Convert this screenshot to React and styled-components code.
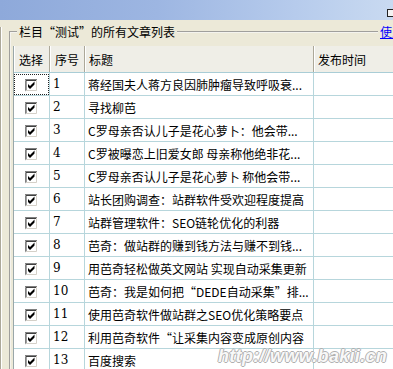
import React from "react";
import styled, { createGlobalStyle } from "styled-components";

const GlobalStyle = createGlobalStyle`
  html, body {
    margin: 0;
    padding: 0;
    background: #ece9d8;
    overflow: hidden;
  }
  body {
    font-family: "Noto Sans CJK SC", "Liberation Sans", sans-serif;
    font-size: 12px;
    color: #000;
  }
`;

const Page = styled.div`
  position: relative;
  width: 393px;
  height: 369px;
  overflow: hidden;
`;

const TopBar = styled.div`
  height: 20px;
  display: flex;
  justify-content: flex-end;
  align-items: flex-start;
  background: linear-gradient(to right, #8ea9da 0%, #9db6e2 40%, #b6cbec 75%, #c9daf1 100%);
`;

const BarButton = styled.div`
  margin-top: 9px;
  width: 5px;
  height: 6px;
  border: 1px solid #222;
  border-right: none;
  background: #f4f4f4;
`;

const Body = styled.div`
  display: flex;
  align-items: flex-start;
`;

const SidePanel = styled.div`
  width: 2px;
  height: 360px;
  margin-top: 7px;
  border-top: 1px solid #aca899;
  border-right: 1px solid #aca899;
  box-shadow: 1px 0 0 #fff;
`;

const Main = styled.div`
  position: relative;
  flex: 0 0 auto;
  width: 440px;
  margin-left: 8px;
  padding-top: 5px;
`;

const Frame = styled.fieldset`
  margin: 0;
  padding: 7px 0 0 2px;
  border: 2px groove #f4f3ee;
  border-right: none;
  border-bottom: none;
  min-width: 0;
`;

const Legend = styled.legend`
  margin-left: 4px;
  padding: 0 2px;
  line-height: 14px;
  height: 14px;
`;

const HelpLink = styled.a`
  position: absolute;
  left: 369px;
  top: 5px;
  line-height: 14px;
  padding: 0 2px;
  background: #ece9d8;
  color: #0000ff;
  text-decoration: underline;
  white-space: nowrap;
`;

const Grid = styled.div`
  background: #fff;
  border-left: 1px solid #9aa7a9;
`;

const Row = styled.div`
  display: grid;
  grid-template-columns: 36px 35px 229px 1fr;
  height: ${(p) => (p.$head ? "27px" : "23px")};
  background: ${(p) => (p.$head ? "#efeee7" : "#fff")};
  border-bottom: 1px solid ${(p) => (p.$head ? "#a9cdd6" : "#b7d6dc")};
  box-sizing: border-box;
`;

const HeadCell = styled.div`
  display: flex;
  align-items: center;
  padding-left: ${(p) => p.$pad || 4}px;
  border-right: 1px solid #aca899;
  box-shadow: inset 1px 0 0 #fff;
  white-space: nowrap;
  overflow: hidden;
`;

const Cell = styled.div`
  position: relative;
  display: flex;
  align-items: center;
  justify-content: ${(p) => (p.$center ? "center" : "flex-start")};
  padding-left: ${(p) => (p.$center ? 0 : 3)}px;
  border-right: 1px solid #b7d6dc;
  white-space: nowrap;
  overflow: hidden;
  font-family: ${(p) =>
    p.$num ? '"DejaVu Serif", "Liberation Serif", serif' : "inherit"};
  font-size: 12px;
`;

const Focus = styled.div`
  position: absolute;
  inset: 1px 0 0 0;
  border: 1px dotted #222;
  pointer-events: none;
`;

const Watermark = styled.div`
  position: absolute;
  left: 218px;
  top: 346px;
  font-family: "Liberation Sans", Arial, sans-serif;
  font-weight: bold;
  font-style: italic;
  font-size: 18px;
  letter-spacing: 0.3px;
  color: #f8f8f8;
  text-shadow: 1px 0 0 #b0b0b0, -1px 0 0 #b0b0b0, 0 1px 0 #b0b0b0, 0 -1px 0 #b0b0b0;
  white-space: nowrap;
`;

const CheckBox = () => (
  <svg width="13" height="13" viewBox="0 0 13 13" style={{ marginTop: 3 }}>
    <rect x="0" y="0" width="13" height="13" fill="#fff" />
    <path d="M0 12.5V0.5H12.5" fill="none" stroke="#808080" />
    <path d="M1 11.5V1.5H11.5" fill="none" stroke="#404040" />
    <path d="M0.5 12.5H12.5V0" fill="none" stroke="#fff" />
    <path d="M1.5 11.5H11.5V1" fill="none" stroke="#d4d0c8" />
    <path d="M3 5 L5 7 L9.5 2.5 V5.5 L5 10 L3 8 Z" fill="#000" />
  </svg>
);

const articles = [
  "蒋经国夫人蒋方良因肺肿瘤导致呼吸衰...",
  "寻找柳芭",
  "C罗母亲否认儿子是花心萝卜：他会带...",
  "C罗被曝恋上旧爱女郎 母亲称他绝非花...",
  "C罗母亲否认儿子是花心萝卜 称他会带...",
  "站长团购调查：站群软件受欢迎程度提高",
  "站群管理软件：SEO链轮优化的利器",
  "芭奇：做站群的赚到钱方法与赚不到钱...",
  "用芭奇轻松做英文网站 实现自动采集更新",
  "芭奇：我是如何把“DEDE自动采集”排...",
  "使用芭奇软件做站群之SEO优化策略要点",
  "利用芭奇软件“让采集内容变成原创内容",
  "百度搜索",
];

export default function App() {
  return (
    <Page>
      <GlobalStyle />
      <TopBar>
        <BarButton />
      </TopBar>
      <Body>
        <SidePanel />
        <Main>
          <Frame>
            <Legend>栏目“测试”的所有文章列表</Legend>
            <Grid>
              <Row $head>
                <HeadCell $pad={5}>选择</HeadCell>
                <HeadCell $pad={5}>序号</HeadCell>
                <HeadCell>标题</HeadCell>
                <HeadCell>发布时间</HeadCell>
              </Row>
              {articles.map((title, i) => (
                <Row key={i}>
                  <Cell $center>
                    <CheckBox />
                    {i === 0 && <Focus />}
                  </Cell>
                  <Cell $num>{i + 1}</Cell>
                  <Cell>{title}</Cell>
                  <Cell />
                </Row>
              ))}
            </Grid>
          </Frame>
          <HelpLink href="#">使用说明</HelpLink>
        </Main>
      </Body>
      <Watermark>http://www.bakii.cn</Watermark>
    </Page>
  );
}
